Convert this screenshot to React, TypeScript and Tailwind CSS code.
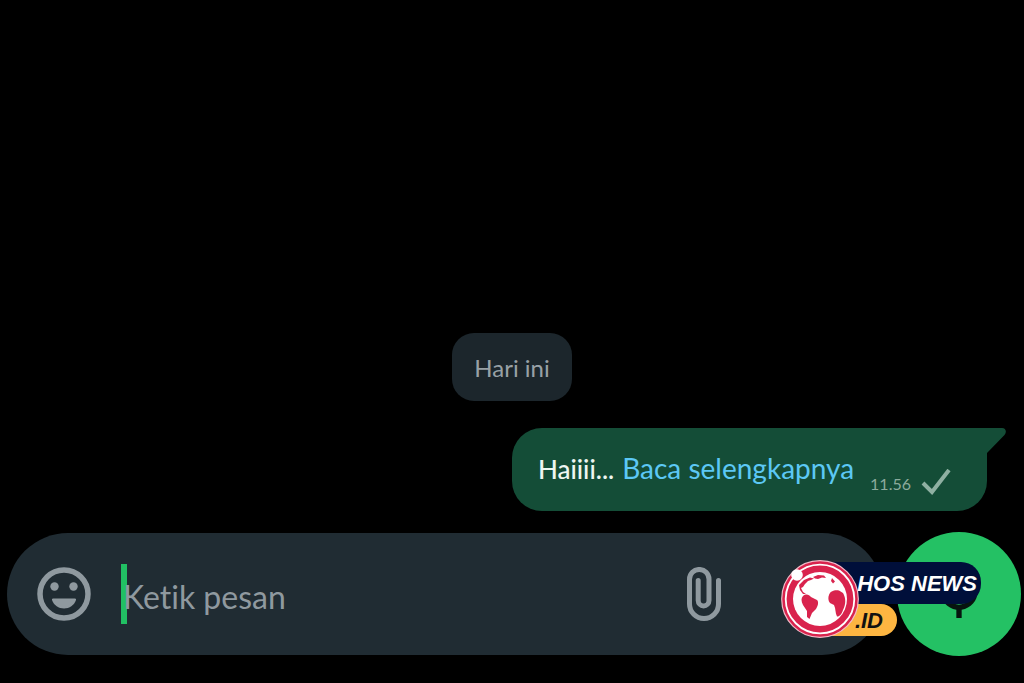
import React from "react";

const chatFont = "font-[Lato,sans-serif] [font-variant-ligatures:none]";

const SmileIcon: React.FC = () => (
    <svg viewBox="0 0 54 54" className="size-[54px]" aria-hidden="true">
        <circle cx="27" cy="27" r="24" fill="none" stroke="currentColor" strokeWidth="5.5"/>
        <circle cx="17.5" cy="19.5" r="4.2" fill="currentColor"/>
        <circle cx="36.5" cy="19.5" r="4.2" fill="currentColor"/>
        <path d="M16 31.5H38Q39.5 31.5 39 33C37 38.5 32.5 41.5 27 41.5S17 38.5 15 33Q14.5 31.5 16 31.5Z" fill="currentColor"/>
    </svg>
);

const ClipIcon: React.FC = () => (
    <svg viewBox="0 0 34 54" className="h-[54px] w-[34px]" fill="none" stroke="currentColor" strokeWidth="5" strokeLinecap="round" aria-hidden="true">
        <path d="M31.5 13.5V37A14.5 14.5 0 0 1 2.5 37V12.2A9.7 9.7 0 0 1 22 12.2V33.5A5.4 5.4 0 0 1 11.2 33.5V13.5"/>
    </svg>
);

const MicIcon: React.FC = () => (
    <svg viewBox="0 0 24 24" className="size-16" fill="currentColor" aria-hidden="true">
        <path d="M12 14c1.66 0 3-1.34 3-3V5c0-1.66-1.34-3-3-3S9 3.34 9 5v6c0 1.66 1.34 3 3 3z"/>
        <path d="M17 11c0 2.76-2.24 5-5 5s-5-2.24-5-5H5c0 3.53 2.61 6.43 6 6.92V21h2v-3.08c3.39-.49 6-3.39 6-6.92h-2z"/>
    </svg>
);

const GlobeLogo: React.FC = () => (
    <svg viewBox="0 0 78 78" className="size-[78px]" aria-hidden="true">
        <circle cx="39" cy="39" r="38.3" fill="#d9234d" stroke="#f3b9c6" strokeWidth="1.2"/>
        <circle cx="39" cy="39" r="34.3" fill="none" stroke="#fff" strokeWidth="1.8"/>
        <circle cx="39" cy="39" r="27" fill="#fff"/>
        <g fill="#d9234d">
            <path d="M18 25L23 20L29 17.5L33 18.5L30 20L27 21L24 24L22 27L20 28L22 32L25 34L22 34L19 30Z"/>
            <path d="M22 36C25 33.5 28 34.5 30 37L36 40C38 42 37 46 35 49L31 53L28.5 59L26 57L26 51L22 45C20 41 20 38 22 36Z"/>
            <path d="M48 35C49 31 54 29.5 58 30.5L62 33C65 38 65 44 62 50C61 54 58 57 56 56.5C54 53 55 49 53 45L49 43C47 41 47 37 48 35Z"/>
            <path d="M32 17L37 15L43 15.5L45 18L41 17.5L37 19L34 18.5ZM51 18L54 21.5L52 23.5L50 21Z"/>
        </g>
        <circle cx="16" cy="15" r="5.8" fill="#fff"/>
    </svg>
);

const NewsBadge: React.FC = () => (
    <div className="absolute top-[30px] right-[43px] w-[200px] font-['Liberation_Sans',sans-serif] font-bold italic">
        <div className="ml-10 flex h-[42px] items-center justify-end rounded-r-[20px] bg-[#000f3a] pr-1 text-[22px] text-white">HOS NEWS</div>
        <div className="ml-10 flex h-8 w-[76px] items-center justify-end rounded-r-2xl bg-[#fdb541] pr-3.5 text-[22px] text-[#111]">.ID</div>
        <div className="absolute top-[-2px] left-0">
            <GlobeLogo/>
        </div>
    </div>
);

const Message: React.FC = () => (
    <div className="relative mr-[37px] flex h-[83px] items-center self-end rounded-l-[30px] rounded-br-[30px] bg-[#144d37] pr-9 pl-[26px]">
        <p className="pb-1 text-[28px] text-[#5cc8f5]">
            <span className="mr-2 text-[26px] font-medium text-[#eef6f1]">Haiiii...</span>
            <a href="#pesan">Baca selengkapnya</a>
        </p>
        <time className="mt-7 ml-4 text-base text-[#8cab9d]">11.56</time>
        <svg viewBox="0 0 30 26" className="mt-6 ml-2.5 h-[26px] w-[30px]" fill="none" stroke="#8fb0a2" strokeWidth="4" aria-label="Terkirim">
            <path d="M2 14L11 23L28 1"/>
        </svg>
        <svg viewBox="0 0 20 27" className="absolute top-0 left-full -ml-px h-[27px] w-5" aria-hidden="true">
            <path d="M0 0H16C20 0 21 4 18.5 7L1 25V27H0Z" fill="#144d37"/>
        </svg>
    </div>
);

const Composer: React.FC = () => (
    <form className="relative mt-[21px] flex items-center gap-3.5 pr-[3px] pl-[7px]" onSubmit={(e) => e.preventDefault()}>
        <div className="flex h-[122px] min-w-0 flex-1 items-center rounded-full bg-[#202c33] pr-[162px] pl-[30px] text-[#8f999f]">
            <button type="button" aria-label="Emoji">
                <SmileIcon/>
            </button>
            <div className="relative ml-[30px] min-w-0 flex-1">
                <span className="absolute top-0 left-0 h-[60px] w-1.5 bg-[#21c063]"/>
                <input
                    type="text"
                    aria-label="Ketik pesan"
                    placeholder="Ketik pesan"
                    className="relative block h-[60px] w-full bg-transparent pt-1 pl-0.5 text-[32px] outline-none placeholder:text-[#8f999f]"
                />
            </div>
            <button type="button" aria-label="Lampirkan">
                <ClipIcon/>
            </button>
        </div>
        <button type="button" aria-label="Rekam suara" className="flex size-[124px] shrink-0 items-center justify-center rounded-full bg-[#24c164] text-[#07150f]">
            <MicIcon/>
        </button>
        <NewsBadge/>
    </form>
);

const App: React.FC = () => {
    return (
        <main className={`flex min-h-screen flex-col justify-end bg-black pb-[27px] ${chatFont}`}>
            <div className="mb-[27px] flex h-[68px] items-center self-center rounded-[22px] bg-[#1c262c] px-[22px] pt-0.5 text-2xl text-[#98a1a6]">Hari ini</div>
            <Message/>
            <Composer/>
        </main>
    );
};

export default App;
